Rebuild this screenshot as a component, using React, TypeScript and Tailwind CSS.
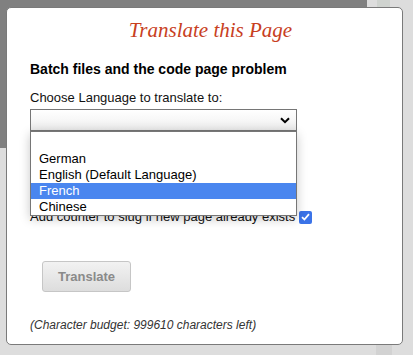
import React from 'react';

const languages = ['', 'German', 'English (Default Language)', 'French', 'Chinese'];

const Cursor = () => (
  <svg width="13" height="20" viewBox="0 0 13 20" className="absolute left-[258px] top-[186px]">
    <path
      d="M0.5 0.5 L0.5 16.5 L4.5 12.8 L7.2 19 L9.6 18 L7 11.8 L12 11.8 Z"
      fill="#fff"
      stroke="#000"
      strokeWidth="1"
    />
  </svg>
);

// the page that sits behind the dialog
const Backdrop = () => (
  <div className="flex h-[355px] w-[413px] flex-col bg-[#dddddd]">
    <div className="flex h-[148px]">
      <div className="w-[367px] bg-[#808080]" />
      <div className="ml-[10px] h-[7px] w-[13px] bg-[#cfd3cf]" />
    </div>
    <div className="flex flex-1 items-end">
      <div className="ml-[376px] h-[10px] w-[16px] bg-[#d2d2d2]" />
    </div>
  </div>
);

export default function App() {
  return (
    <div className="relative w-[413px] h-[355px] overflow-hidden font-['Liberation_Sans',Arial,sans-serif]">
      <Backdrop />

      <div className="absolute left-[6px] top-[7px] w-[397px] h-[338px] rounded-[5px] border border-[#7a7a7a] bg-white pt-[10px] pl-[23px] pr-[11px] flex flex-col items-start">
        <div className="w-full h-[24px] text-center font-['Liberation_Serif',Georgia,serif] italic text-[21px] leading-[24px] text-[#c8401e]">
          Translate this Page
        </div>

        <div className="mt-[19px] h-[16px] text-[14px] leading-[16px] font-bold text-black">
          Batch files and the code page problem
        </div>

        <div className="mt-[13px] h-[16px] text-[13px] leading-[16px] text-[#111]">
          Choose Language to translate to:
        </div>

        <div className="relative mt-[3px] flex w-[267px] h-[22px] items-center justify-end pr-[6px] border border-[#767676] bg-gradient-to-b from-white via-[#f7f7f7] to-[#e9e9e9]">
          <svg width="10" height="7" viewBox="0 0 10 7">
            <path d="M1 1.2 L5 5.2 L9 1.2" fill="none" stroke="#000" strokeWidth="2" />
          </svg>
          <div className="absolute -left-px top-[21px] z-10 flex w-[267px] flex-col border border-[#767676] bg-white pt-[3px] shadow-[0_3px_10px_rgba(0,0,0,0.22)]">
            {languages.map((lang, i) => (
              <div
                key={i}
                className={
                  lang === 'French'
                    ? 'h-[16px] pl-[8px] text-[13px] leading-[16px] bg-[#4a86ef] text-white'
                    : 'h-[16px] pl-[8px] text-[13px] leading-[16px] text-black'
                }
              >
                {lang}
              </div>
            ))}
          </div>
        </div>

        <div className="mt-[78px] flex h-[16px] items-center gap-[4px] text-[13px] leading-[16px] text-[#111]">
          <span>Add counter to slug if new page already exists</span>
          <span className="flex h-[13px] w-[13px] items-center justify-center rounded-[2px] bg-[#3b73e8]">
            <svg width="9" height="8" viewBox="0 0 9 8">
              <path d="M1 4.2 L3.4 6.5 L8 1.2" fill="none" stroke="#fff" strokeWidth="1.8" />
            </svg>
          </span>
        </div>

        <button className="mt-[36px] ml-3 flex h-[31px] w-[89px] items-center justify-center rounded-[3px] border border-[#c6c6c6] bg-gradient-to-b from-[#f2f2f2] to-[#dddddd] text-[13px] font-bold text-[#8a8a8a]">
          Translate
        </button>

        <div className="mt-[26px] h-[14px] text-[12px] leading-[14px] italic text-[#333]">
          (Character budget: 999610 characters left)
        </div>
      </div>

      <Cursor />
    </div>
  );
}
